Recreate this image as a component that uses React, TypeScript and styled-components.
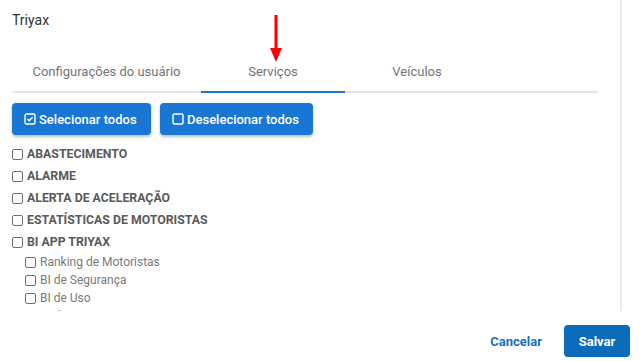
import React from "react";
import styled, { createGlobalStyle } from "styled-components";

const Global = createGlobalStyle`
  html, body { margin: 0; padding: 0; background: #fff; }
  body { font-family: "Roboto", "Noto Sans", sans-serif; width: 642px; height: 361px; overflow: hidden; }
  * { box-sizing: border-box; }
`;

const Page = styled.div`
  width: 642px;
  height: 361px;
  display: flex;
  flex-direction: column;
  position: relative;
`;

const Scroller = styled.div`
  width: 622px;
  height: 311px;
  border-right: 2px solid #ececec;
  overflow: hidden;
  padding: 11px 22px 0 12px;
`;

const Title = styled.div`
  font-size: 14px;
  color: #333;
  line-height: 18px;
  height: 37px;
`;

const Tabs = styled.div`
  display: flex;
  border-bottom: 2px solid #e6e6e6;
  height: 45px;
`;

const Tab = styled.div<{ $w: number; $active?: boolean }>`
  width: ${(p) => p.$w}px;
  display: flex;
  align-items: center;
  justify-content: center;
  font-size: 13px;
  color: #757575;
  margin-bottom: -2px;
  border-bottom: 2px solid ${(p) => (p.$active ? "#1976d2" : "transparent")};
  padding-top: 4px;
`;

const ButtonRow = styled.div`
  display: flex;
  gap: 9px;
  margin-top: 10px;
`;

const BlueButton = styled.button<{ $w: number }>`
  width: ${(p) => p.$w}px;
  height: 32px;
  border: none;
  border-radius: 4px;
  background: #1976d2;
  color: #fff;
  font-family: inherit;
  font-size: 13px;
  font-weight: 500;
  display: flex;
  align-items: center;
  gap: 3px;
  padding: 0 12px;
  box-shadow: 0 2px 3px rgba(0, 0, 0, 0.25);
  cursor: pointer;
`;

const List = styled.div`
  display: flex;
  flex-direction: column;
  margin-top: 8px;
`;

const Item = styled.label<{ $sub?: boolean }>`
  display: flex;
  align-items: center;
  gap: 4px;
  height: ${(p) => (p.$sub ? 18 : 22)}px;
  padding-left: ${(p) => (p.$sub ? 13 : 0)}px;
  font-size: ${(p) => (p.$sub ? 12 : 12.3)}px;
  font-weight: ${(p) => (p.$sub ? 400 : 700)};
  color: ${(p) => (p.$sub ? "#7a7a7a" : "#5a5a5a")};
`;

const Box = styled.span`
  width: 11px;
  height: 11px;
  border: 1px solid #707070;
  border-radius: 2px;
  display: inline-block;
  flex: none;
`;

const Footer = styled.div`
  display: flex;
  justify-content: flex-end;
  align-items: center;
  gap: 22px;
  padding: 14px 12px 0 0;
`;

const TextButton = styled.button`
  background: none;
  border: none;
  color: #1a6fb5;
  font-family: inherit;
  font-weight: 700;
  font-size: 13px;
  padding: 0;
  cursor: pointer;
`;

const SaveButton = styled.button`
  height: 32px;
  width: 66px;
  border: none;
  border-radius: 4px;
  background: #0b6cbc;
  color: #fff;
  font-family: inherit;
  font-weight: 700;
  font-size: 13px;
  cursor: pointer;
`;

const Arrow = styled.svg`
  position: absolute;
  left: 269px;
  top: 15px;
`;

const CheckIcon = ({ checked }: { checked?: boolean }) => (
  <svg width="12" height="12" viewBox="0 0 12 12">
    <rect x="1" y="1" width="10" height="10" rx="1.5" fill="none" stroke="#fff" strokeWidth="1.4" />
    {checked && <path d="M3.4 6.1 L5.2 7.8 L8.6 4.2" fill="none" stroke="#fff" strokeWidth="1.4" />}
  </svg>
);

const main = ["ABASTECIMENTO", "ALARME", "ALERTA DE ACELERAÇÃO", "ESTATÍSTICAS DE MOTORISTAS", "BI APP TRIYAX"];
const subs = ["Ranking de Motoristas", "BI de Segurança", "BI de Uso", "BI de Viagens"];

export default function App() {
  return (
    <Page>
      <Global />
      <Scroller>
        <Title>Triyax</Title>
        <Tabs>
          <Tab $w={189}>Configurações do usuário</Tab>
          <Tab $w={144} $active>Serviços</Tab>
          <Tab $w={144}>Veículos</Tab>
        </Tabs>
        <ButtonRow>
          <BlueButton $w={139}>
            <CheckIcon checked />
            Selecionar todos
          </BlueButton>
          <BlueButton $w={153}>
            <CheckIcon />
            Deselecionar todos
          </BlueButton>
        </ButtonRow>
        <List>
          {main.map((m) => (
            <Item key={m}>
              <Box />
              {m}
            </Item>
          ))}
          {subs.map((s) => (
            <Item key={s} $sub>
              <Box />
              {s}
            </Item>
          ))}
        </List>
      </Scroller>
      <Footer>
        <TextButton>Cancelar</TextButton>
        <SaveButton>Salvar</SaveButton>
      </Footer>
      <Arrow width="14" height="48" viewBox="0 0 14 48">
        <rect x="5.5" y="0" width="3" height="34" fill="#f00" />
        <polygon points="1,33 13,33 7,47" fill="#f00" />
      </Arrow>
    </Page>
  );
}
